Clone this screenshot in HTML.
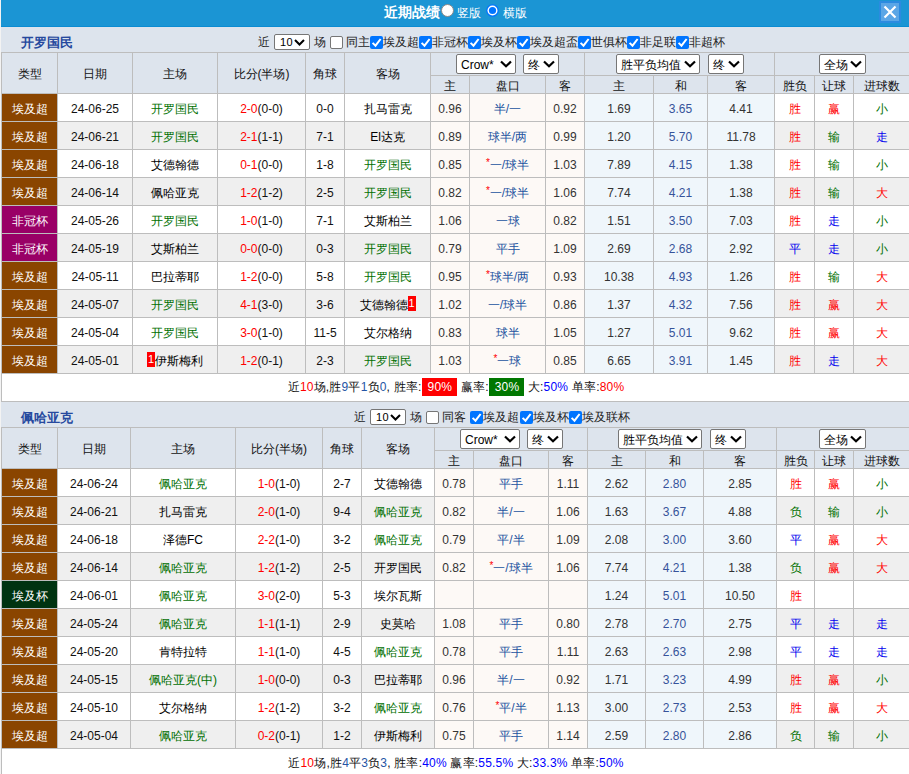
<!DOCTYPE html><html><head><meta charset="utf-8"><style>
*{box-sizing:border-box}
html,body{margin:0;padding:0}
body{width:909px;height:774px;overflow:hidden;position:relative;background:#f3f3f3;font-family:"Liberation Sans",sans-serif;font-size:12px;color:#222}
.title{position:absolute;left:1px;top:0;width:908px;height:27px;background:#1b95d4;border-bottom:1px solid #0b8cd2}
.bar{position:absolute;left:1px;width:908px;height:25px;background:#dde4ed}
.tb{position:absolute;background:#bdbdbd}
.c{position:absolute;text-align:center;white-space:nowrap;overflow:hidden;color:#111}
.od{color:#333}
.lg{color:#fff}
.sub{}
.rc{display:inline-block;width:8px;height:15px;line-height:15px;background:#f00;color:#fff;font-size:11px;vertical-align:2px;text-align:center}
.hc{color:#2353a0}
.ast{color:#f00;font-size:10px;position:relative;top:-3px}
.dr{color:#36539a}
.abs{position:absolute;white-space:nowrap}
.s{position:absolute;display:inline-block;background:#fff;border:1px solid #767676;border-radius:2px;color:#000;text-align:left;line-height:20px;padding-left:4px}
.chev{position:absolute;right:3px;top:5px}
.cb{position:absolute;width:13px;height:13px;border-radius:2px}
.cb.off{background:#fff;border:1px solid #767676}
.cb.on{background:#0075ff}
.sum{letter-spacing:0.2px}
.nb{color:#2555a5}
.sum .pr{display:inline-block;color:#fff;padding:0 5px 0 6px;line-height:18px}
</style></head><body>

<div class="title"></div>
<div class="abs" style="left:384px;top:3px;font-size:14px;font-weight:bold;color:#fff;line-height:18px">近期战绩</div>
<div class="abs" style="left:441px;top:4px;width:13px;height:13px;border-radius:50%;background:#fff;border:1px solid #888"></div>
<div class="abs" style="left:457px;top:5px;color:#fff;line-height:16px">竖版</div>
<svg class="abs" style="left:486px;top:4px" width="13" height="13"><circle cx="6.5" cy="6.5" r="6.3" fill="#0075ff"/><circle cx="6.5" cy="6.5" r="5" fill="#fff"/><circle cx="6.5" cy="6.5" r="3.6" fill="#0075ff"/></svg>
<div class="abs" style="left:503px;top:5px;color:#fff;line-height:16px">横版</div>
<div class="abs" style="left:879px;top:1px;width:22px;height:22px;background:#2b8be0"></div>
<div class="abs" style="left:881px;top:3px;width:18px;height:18px;background:#5ba6e6"></div>
<svg class="abs" style="left:879px;top:1px" width="22" height="22"><path d="M5.5 5.5 L16.5 16.5 M16.5 5.5 L5.5 16.5" stroke="#fff" stroke-width="2.2"/></svg>
<div class="bar" style="top:27px"></div>
<div class="abs" style="left:21px;top:35px;font-size:13px;font-weight:bold;color:#26499e;line-height:15px">开罗国民</div>
<div class="abs" style="left:258px;top:34px;line-height:16px">近</div>
<span class="s" style="left:274px;top:34px;width:36px;height:16px;line-height:15px;padding-left:5px;font-size:11px;border-radius:2px;letter-spacing:0.5px">10<svg class="chev" style="top:4px;right:4px" width="11" height="7"><path d="M1 1 L5.5 5.5 L10 1" stroke="#000" stroke-width="2" fill="none"/></svg></span>
<div class="abs" style="left:314px;top:34px;line-height:16px">场</div>
<div class="cb off" style="left:330px;top:36px"></div>
<div class="abs" style="left:346px;top:34px;line-height:16px">同主</div>
<div class="cb on" style="left:370px;top:36px"><svg width="13" height="13" style="position:absolute;left:0;top:0"><path d="M2.6 6.9 L5.5 9.7 L10.6 3" stroke="#fff" stroke-width="2" fill="none"/></svg></div>
<div class="abs" style="left:383px;top:34px;line-height:16px">埃及超</div>
<div class="cb on" style="left:419px;top:36px"><svg width="13" height="13" style="position:absolute;left:0;top:0"><path d="M2.6 6.9 L5.5 9.7 L10.6 3" stroke="#fff" stroke-width="2" fill="none"/></svg></div>
<div class="abs" style="left:432px;top:34px;line-height:16px">非冠杯</div>
<div class="cb on" style="left:468px;top:36px"><svg width="13" height="13" style="position:absolute;left:0;top:0"><path d="M2.6 6.9 L5.5 9.7 L10.6 3" stroke="#fff" stroke-width="2" fill="none"/></svg></div>
<div class="abs" style="left:481px;top:34px;line-height:16px">埃及杯</div>
<div class="cb on" style="left:517px;top:36px"><svg width="13" height="13" style="position:absolute;left:0;top:0"><path d="M2.6 6.9 L5.5 9.7 L10.6 3" stroke="#fff" stroke-width="2" fill="none"/></svg></div>
<div class="abs" style="left:530px;top:34px;line-height:16px">埃及超盃</div>
<div class="cb on" style="left:578px;top:36px"><svg width="13" height="13" style="position:absolute;left:0;top:0"><path d="M2.6 6.9 L5.5 9.7 L10.6 3" stroke="#fff" stroke-width="2" fill="none"/></svg></div>
<div class="abs" style="left:591px;top:34px;line-height:16px">世俱杯</div>
<div class="cb on" style="left:627px;top:36px"><svg width="13" height="13" style="position:absolute;left:0;top:0"><path d="M2.6 6.9 L5.5 9.7 L10.6 3" stroke="#fff" stroke-width="2" fill="none"/></svg></div>
<div class="abs" style="left:640px;top:34px;line-height:16px">非足联</div>
<div class="cb on" style="left:676px;top:36px"><svg width="13" height="13" style="position:absolute;left:0;top:0"><path d="M2.6 6.9 L5.5 9.7 L10.6 3" stroke="#fff" stroke-width="2" fill="none"/></svg></div>
<div class="abs" style="left:689px;top:34px;line-height:16px">非超杯</div>
<div class="tb" style="left:1px;top:52px;width:910px;height:350px"></div>
<div class="c " style="left:2px;top:53px;width:55px;height:40px;line-height:43px;background:#dde4ed">类型</div>
<div class="c " style="left:58px;top:53px;width:74px;height:40px;line-height:43px;background:#dde4ed">日期</div>
<div class="c " style="left:133px;top:53px;width:84px;height:40px;line-height:43px;background:#dde4ed">主场</div>
<div class="c " style="left:218px;top:53px;width:87px;height:40px;line-height:43px;background:#dde4ed">比分(半场)</div>
<div class="c " style="left:306px;top:53px;width:38px;height:40px;line-height:43px;background:#dde4ed">角球</div>
<div class="c " style="left:345px;top:53px;width:85px;height:40px;line-height:43px;background:#dde4ed">客场</div>
<div class="c sel" style="left:431px;top:53px;width:153px;height:22px;line-height:25px;background:#dde4ed"></div>
<div class="c sel" style="left:585px;top:53px;width:189px;height:22px;line-height:25px;background:#dde4ed"></div>
<div class="c sel" style="left:775px;top:53px;width:135px;height:22px;line-height:25px;background:#dde4ed"></div>
<div class="c sub" style="left:431px;top:76px;width:38px;height:17px;line-height:20px;background:#dde4ed">主</div>
<div class="c sub" style="left:470px;top:76px;width:75px;height:17px;line-height:20px;background:#dde4ed">盘口</div>
<div class="c sub" style="left:546px;top:76px;width:38px;height:17px;line-height:20px;background:#dde4ed">客</div>
<div class="c sub" style="left:585px;top:76px;width:68px;height:17px;line-height:20px;background:#dde4ed">主</div>
<div class="c sub" style="left:654px;top:76px;width:53px;height:17px;line-height:20px;background:#dde4ed">和</div>
<div class="c sub" style="left:708px;top:76px;width:66px;height:17px;line-height:20px;background:#dde4ed">客</div>
<div class="c sub" style="left:775px;top:76px;width:39px;height:17px;line-height:20px;background:#dde4ed">胜负</div>
<div class="c sub" style="left:815px;top:76px;width:38px;height:17px;line-height:20px;background:#dde4ed">让球</div>
<div class="c sub" style="left:854px;top:76px;width:56px;height:17px;line-height:20px;background:#dde4ed">进球数</div>
<div class="c lg" style="left:2px;top:94px;width:55px;height:27px;line-height:30px;background:#8a4500">埃及超</div>
<div class="c dt" style="left:58px;top:94px;width:74px;height:27px;line-height:30px;background:#ffffff">24-06-25</div>
<div class="c " style="left:133px;top:94px;width:84px;height:27px;line-height:30px;background:#ffffff"><span style="color:#007000">开罗国民</span></div>
<div class="c sc" style="left:218px;top:94px;width:87px;height:27px;line-height:30px;background:#ffffff"><span style="color:#ff0000">2-0</span>(0-0)</div>
<div class="c dt" style="left:306px;top:94px;width:38px;height:27px;line-height:30px;background:#ffffff">0-0</div>
<div class="c " style="left:345px;top:94px;width:85px;height:27px;line-height:30px;background:#ffffff"><span style="color:#000">扎马雷克</span></div>
<div class="c od" style="left:431px;top:94px;width:38px;height:27px;line-height:30px;background:#fdf9f6">0.96</div>
<div class="c od" style="left:470px;top:94px;width:75px;height:27px;line-height:30px;background:#fdf9f6"><span class="hc">半/一</span></div>
<div class="c od" style="left:546px;top:94px;width:38px;height:27px;line-height:30px;background:#fdf9f6">0.92</div>
<div class="c od" style="left:585px;top:94px;width:68px;height:27px;line-height:30px;background:#eff6fb">1.69</div>
<div class="c od" style="left:654px;top:94px;width:53px;height:27px;line-height:30px;background:#eff6fb"><span class="dr">3.65</span></div>
<div class="c od" style="left:708px;top:94px;width:66px;height:27px;line-height:30px;background:#eff6fb">4.41</div>
<div class="c rs" style="left:775px;top:94px;width:39px;height:27px;line-height:30px;background:#ffffff"><span style="color:#ff0000">胜</span></div>
<div class="c rs" style="left:815px;top:94px;width:38px;height:27px;line-height:30px;background:#ffffff"><span style="color:#ff0000">赢</span></div>
<div class="c rs" style="left:854px;top:94px;width:56px;height:27px;line-height:30px;background:#ffffff"><span style="color:#007000">小</span></div>
<div class="c lg" style="left:2px;top:122px;width:55px;height:27px;line-height:30px;background:#8a4500">埃及超</div>
<div class="c dt" style="left:58px;top:122px;width:74px;height:27px;line-height:30px;background:#efefef">24-06-21</div>
<div class="c " style="left:133px;top:122px;width:84px;height:27px;line-height:30px;background:#efefef"><span style="color:#007000">开罗国民</span></div>
<div class="c sc" style="left:218px;top:122px;width:87px;height:27px;line-height:30px;background:#efefef"><span style="color:#ff0000">2-1</span>(1-1)</div>
<div class="c dt" style="left:306px;top:122px;width:38px;height:27px;line-height:30px;background:#efefef">7-1</div>
<div class="c " style="left:345px;top:122px;width:85px;height:27px;line-height:30px;background:#efefef"><span style="color:#000">El达克</span></div>
<div class="c od" style="left:431px;top:122px;width:38px;height:27px;line-height:30px;background:#fdf9f6">0.89</div>
<div class="c od" style="left:470px;top:122px;width:75px;height:27px;line-height:30px;background:#fdf9f6"><span class="hc">球半/两</span></div>
<div class="c od" style="left:546px;top:122px;width:38px;height:27px;line-height:30px;background:#fdf9f6">0.99</div>
<div class="c od" style="left:585px;top:122px;width:68px;height:27px;line-height:30px;background:#eff6fb">1.20</div>
<div class="c od" style="left:654px;top:122px;width:53px;height:27px;line-height:30px;background:#eff6fb"><span class="dr">5.70</span></div>
<div class="c od" style="left:708px;top:122px;width:66px;height:27px;line-height:30px;background:#eff6fb">11.78</div>
<div class="c rs" style="left:775px;top:122px;width:39px;height:27px;line-height:30px;background:#efefef"><span style="color:#ff0000">胜</span></div>
<div class="c rs" style="left:815px;top:122px;width:38px;height:27px;line-height:30px;background:#efefef"><span style="color:#007000">输</span></div>
<div class="c rs" style="left:854px;top:122px;width:56px;height:27px;line-height:30px;background:#efefef"><span style="color:#0000ee">走</span></div>
<div class="c lg" style="left:2px;top:150px;width:55px;height:27px;line-height:30px;background:#8a4500">埃及超</div>
<div class="c dt" style="left:58px;top:150px;width:74px;height:27px;line-height:30px;background:#ffffff">24-06-18</div>
<div class="c " style="left:133px;top:150px;width:84px;height:27px;line-height:30px;background:#ffffff"><span style="color:#000">艾德翰德</span></div>
<div class="c sc" style="left:218px;top:150px;width:87px;height:27px;line-height:30px;background:#ffffff"><span style="color:#ff0000">0-1</span>(0-0)</div>
<div class="c dt" style="left:306px;top:150px;width:38px;height:27px;line-height:30px;background:#ffffff">1-8</div>
<div class="c " style="left:345px;top:150px;width:85px;height:27px;line-height:30px;background:#ffffff"><span style="color:#007000">开罗国民</span></div>
<div class="c od" style="left:431px;top:150px;width:38px;height:27px;line-height:30px;background:#fdf9f6">0.85</div>
<div class="c od" style="left:470px;top:150px;width:75px;height:27px;line-height:30px;background:#fdf9f6"><span class="hc"><span class="ast">*</span>一/球半</span></div>
<div class="c od" style="left:546px;top:150px;width:38px;height:27px;line-height:30px;background:#fdf9f6">1.03</div>
<div class="c od" style="left:585px;top:150px;width:68px;height:27px;line-height:30px;background:#eff6fb">7.89</div>
<div class="c od" style="left:654px;top:150px;width:53px;height:27px;line-height:30px;background:#eff6fb"><span class="dr">4.15</span></div>
<div class="c od" style="left:708px;top:150px;width:66px;height:27px;line-height:30px;background:#eff6fb">1.38</div>
<div class="c rs" style="left:775px;top:150px;width:39px;height:27px;line-height:30px;background:#ffffff"><span style="color:#ff0000">胜</span></div>
<div class="c rs" style="left:815px;top:150px;width:38px;height:27px;line-height:30px;background:#ffffff"><span style="color:#007000">输</span></div>
<div class="c rs" style="left:854px;top:150px;width:56px;height:27px;line-height:30px;background:#ffffff"><span style="color:#007000">小</span></div>
<div class="c lg" style="left:2px;top:178px;width:55px;height:27px;line-height:30px;background:#8a4500">埃及超</div>
<div class="c dt" style="left:58px;top:178px;width:74px;height:27px;line-height:30px;background:#efefef">24-06-14</div>
<div class="c " style="left:133px;top:178px;width:84px;height:27px;line-height:30px;background:#efefef"><span style="color:#000">佩哈亚克</span></div>
<div class="c sc" style="left:218px;top:178px;width:87px;height:27px;line-height:30px;background:#efefef"><span style="color:#ff0000">1-2</span>(1-2)</div>
<div class="c dt" style="left:306px;top:178px;width:38px;height:27px;line-height:30px;background:#efefef">2-5</div>
<div class="c " style="left:345px;top:178px;width:85px;height:27px;line-height:30px;background:#efefef"><span style="color:#007000">开罗国民</span></div>
<div class="c od" style="left:431px;top:178px;width:38px;height:27px;line-height:30px;background:#fdf9f6">0.82</div>
<div class="c od" style="left:470px;top:178px;width:75px;height:27px;line-height:30px;background:#fdf9f6"><span class="hc"><span class="ast">*</span>一/球半</span></div>
<div class="c od" style="left:546px;top:178px;width:38px;height:27px;line-height:30px;background:#fdf9f6">1.06</div>
<div class="c od" style="left:585px;top:178px;width:68px;height:27px;line-height:30px;background:#eff6fb">7.74</div>
<div class="c od" style="left:654px;top:178px;width:53px;height:27px;line-height:30px;background:#eff6fb"><span class="dr">4.21</span></div>
<div class="c od" style="left:708px;top:178px;width:66px;height:27px;line-height:30px;background:#eff6fb">1.38</div>
<div class="c rs" style="left:775px;top:178px;width:39px;height:27px;line-height:30px;background:#efefef"><span style="color:#ff0000">胜</span></div>
<div class="c rs" style="left:815px;top:178px;width:38px;height:27px;line-height:30px;background:#efefef"><span style="color:#007000">输</span></div>
<div class="c rs" style="left:854px;top:178px;width:56px;height:27px;line-height:30px;background:#efefef"><span style="color:#ff0000">大</span></div>
<div class="c lg" style="left:2px;top:206px;width:55px;height:27px;line-height:30px;background:#990066">非冠杯</div>
<div class="c dt" style="left:58px;top:206px;width:74px;height:27px;line-height:30px;background:#ffffff">24-05-26</div>
<div class="c " style="left:133px;top:206px;width:84px;height:27px;line-height:30px;background:#ffffff"><span style="color:#007000">开罗国民</span></div>
<div class="c sc" style="left:218px;top:206px;width:87px;height:27px;line-height:30px;background:#ffffff"><span style="color:#ff0000">1-0</span>(1-0)</div>
<div class="c dt" style="left:306px;top:206px;width:38px;height:27px;line-height:30px;background:#ffffff">7-1</div>
<div class="c " style="left:345px;top:206px;width:85px;height:27px;line-height:30px;background:#ffffff"><span style="color:#000">艾斯柏兰</span></div>
<div class="c od" style="left:431px;top:206px;width:38px;height:27px;line-height:30px;background:#fdf9f6">1.06</div>
<div class="c od" style="left:470px;top:206px;width:75px;height:27px;line-height:30px;background:#fdf9f6"><span class="hc">一球</span></div>
<div class="c od" style="left:546px;top:206px;width:38px;height:27px;line-height:30px;background:#fdf9f6">0.82</div>
<div class="c od" style="left:585px;top:206px;width:68px;height:27px;line-height:30px;background:#eff6fb">1.51</div>
<div class="c od" style="left:654px;top:206px;width:53px;height:27px;line-height:30px;background:#eff6fb"><span class="dr">3.50</span></div>
<div class="c od" style="left:708px;top:206px;width:66px;height:27px;line-height:30px;background:#eff6fb">7.03</div>
<div class="c rs" style="left:775px;top:206px;width:39px;height:27px;line-height:30px;background:#ffffff"><span style="color:#ff0000">胜</span></div>
<div class="c rs" style="left:815px;top:206px;width:38px;height:27px;line-height:30px;background:#ffffff"><span style="color:#0000ee">走</span></div>
<div class="c rs" style="left:854px;top:206px;width:56px;height:27px;line-height:30px;background:#ffffff"><span style="color:#007000">小</span></div>
<div class="c lg" style="left:2px;top:234px;width:55px;height:27px;line-height:30px;background:#990066">非冠杯</div>
<div class="c dt" style="left:58px;top:234px;width:74px;height:27px;line-height:30px;background:#efefef">24-05-19</div>
<div class="c " style="left:133px;top:234px;width:84px;height:27px;line-height:30px;background:#efefef"><span style="color:#000">艾斯柏兰</span></div>
<div class="c sc" style="left:218px;top:234px;width:87px;height:27px;line-height:30px;background:#efefef"><span style="color:#ff0000">0-0</span>(0-0)</div>
<div class="c dt" style="left:306px;top:234px;width:38px;height:27px;line-height:30px;background:#efefef">0-3</div>
<div class="c " style="left:345px;top:234px;width:85px;height:27px;line-height:30px;background:#efefef"><span style="color:#007000">开罗国民</span></div>
<div class="c od" style="left:431px;top:234px;width:38px;height:27px;line-height:30px;background:#fdf9f6">0.79</div>
<div class="c od" style="left:470px;top:234px;width:75px;height:27px;line-height:30px;background:#fdf9f6"><span class="hc">平手</span></div>
<div class="c od" style="left:546px;top:234px;width:38px;height:27px;line-height:30px;background:#fdf9f6">1.09</div>
<div class="c od" style="left:585px;top:234px;width:68px;height:27px;line-height:30px;background:#eff6fb">2.69</div>
<div class="c od" style="left:654px;top:234px;width:53px;height:27px;line-height:30px;background:#eff6fb"><span class="dr">2.68</span></div>
<div class="c od" style="left:708px;top:234px;width:66px;height:27px;line-height:30px;background:#eff6fb">2.92</div>
<div class="c rs" style="left:775px;top:234px;width:39px;height:27px;line-height:30px;background:#efefef"><span style="color:#0000ee">平</span></div>
<div class="c rs" style="left:815px;top:234px;width:38px;height:27px;line-height:30px;background:#efefef"><span style="color:#0000ee">走</span></div>
<div class="c rs" style="left:854px;top:234px;width:56px;height:27px;line-height:30px;background:#efefef"><span style="color:#007000">小</span></div>
<div class="c lg" style="left:2px;top:262px;width:55px;height:27px;line-height:30px;background:#8a4500">埃及超</div>
<div class="c dt" style="left:58px;top:262px;width:74px;height:27px;line-height:30px;background:#ffffff">24-05-11</div>
<div class="c " style="left:133px;top:262px;width:84px;height:27px;line-height:30px;background:#ffffff"><span style="color:#000">巴拉蒂耶</span></div>
<div class="c sc" style="left:218px;top:262px;width:87px;height:27px;line-height:30px;background:#ffffff"><span style="color:#ff0000">1-2</span>(0-0)</div>
<div class="c dt" style="left:306px;top:262px;width:38px;height:27px;line-height:30px;background:#ffffff">5-8</div>
<div class="c " style="left:345px;top:262px;width:85px;height:27px;line-height:30px;background:#ffffff"><span style="color:#007000">开罗国民</span></div>
<div class="c od" style="left:431px;top:262px;width:38px;height:27px;line-height:30px;background:#fdf9f6">0.95</div>
<div class="c od" style="left:470px;top:262px;width:75px;height:27px;line-height:30px;background:#fdf9f6"><span class="hc"><span class="ast">*</span>球半/两</span></div>
<div class="c od" style="left:546px;top:262px;width:38px;height:27px;line-height:30px;background:#fdf9f6">0.93</div>
<div class="c od" style="left:585px;top:262px;width:68px;height:27px;line-height:30px;background:#eff6fb">10.38</div>
<div class="c od" style="left:654px;top:262px;width:53px;height:27px;line-height:30px;background:#eff6fb"><span class="dr">4.93</span></div>
<div class="c od" style="left:708px;top:262px;width:66px;height:27px;line-height:30px;background:#eff6fb">1.26</div>
<div class="c rs" style="left:775px;top:262px;width:39px;height:27px;line-height:30px;background:#ffffff"><span style="color:#ff0000">胜</span></div>
<div class="c rs" style="left:815px;top:262px;width:38px;height:27px;line-height:30px;background:#ffffff"><span style="color:#007000">输</span></div>
<div class="c rs" style="left:854px;top:262px;width:56px;height:27px;line-height:30px;background:#ffffff"><span style="color:#ff0000">大</span></div>
<div class="c lg" style="left:2px;top:290px;width:55px;height:27px;line-height:30px;background:#8a4500">埃及超</div>
<div class="c dt" style="left:58px;top:290px;width:74px;height:27px;line-height:30px;background:#efefef">24-05-07</div>
<div class="c " style="left:133px;top:290px;width:84px;height:27px;line-height:30px;background:#efefef"><span style="color:#007000">开罗国民</span></div>
<div class="c sc" style="left:218px;top:290px;width:87px;height:27px;line-height:30px;background:#efefef"><span style="color:#ff0000">4-1</span>(3-0)</div>
<div class="c dt" style="left:306px;top:290px;width:38px;height:27px;line-height:30px;background:#efefef">3-6</div>
<div class="c " style="left:345px;top:290px;width:85px;height:27px;line-height:30px;background:#efefef"><span style="color:#000">艾德翰德</span><span class="rc">1</span></div>
<div class="c od" style="left:431px;top:290px;width:38px;height:27px;line-height:30px;background:#fdf9f6">1.02</div>
<div class="c od" style="left:470px;top:290px;width:75px;height:27px;line-height:30px;background:#fdf9f6"><span class="hc">一/球半</span></div>
<div class="c od" style="left:546px;top:290px;width:38px;height:27px;line-height:30px;background:#fdf9f6">0.86</div>
<div class="c od" style="left:585px;top:290px;width:68px;height:27px;line-height:30px;background:#eff6fb">1.37</div>
<div class="c od" style="left:654px;top:290px;width:53px;height:27px;line-height:30px;background:#eff6fb"><span class="dr">4.32</span></div>
<div class="c od" style="left:708px;top:290px;width:66px;height:27px;line-height:30px;background:#eff6fb">7.56</div>
<div class="c rs" style="left:775px;top:290px;width:39px;height:27px;line-height:30px;background:#efefef"><span style="color:#ff0000">胜</span></div>
<div class="c rs" style="left:815px;top:290px;width:38px;height:27px;line-height:30px;background:#efefef"><span style="color:#ff0000">赢</span></div>
<div class="c rs" style="left:854px;top:290px;width:56px;height:27px;line-height:30px;background:#efefef"><span style="color:#ff0000">大</span></div>
<div class="c lg" style="left:2px;top:318px;width:55px;height:27px;line-height:30px;background:#8a4500">埃及超</div>
<div class="c dt" style="left:58px;top:318px;width:74px;height:27px;line-height:30px;background:#ffffff">24-05-04</div>
<div class="c " style="left:133px;top:318px;width:84px;height:27px;line-height:30px;background:#ffffff"><span style="color:#007000">开罗国民</span></div>
<div class="c sc" style="left:218px;top:318px;width:87px;height:27px;line-height:30px;background:#ffffff"><span style="color:#ff0000">3-0</span>(1-0)</div>
<div class="c dt" style="left:306px;top:318px;width:38px;height:27px;line-height:30px;background:#ffffff">11-5</div>
<div class="c " style="left:345px;top:318px;width:85px;height:27px;line-height:30px;background:#ffffff"><span style="color:#000">艾尔格纳</span></div>
<div class="c od" style="left:431px;top:318px;width:38px;height:27px;line-height:30px;background:#fdf9f6">0.83</div>
<div class="c od" style="left:470px;top:318px;width:75px;height:27px;line-height:30px;background:#fdf9f6"><span class="hc">球半</span></div>
<div class="c od" style="left:546px;top:318px;width:38px;height:27px;line-height:30px;background:#fdf9f6">1.05</div>
<div class="c od" style="left:585px;top:318px;width:68px;height:27px;line-height:30px;background:#eff6fb">1.27</div>
<div class="c od" style="left:654px;top:318px;width:53px;height:27px;line-height:30px;background:#eff6fb"><span class="dr">5.01</span></div>
<div class="c od" style="left:708px;top:318px;width:66px;height:27px;line-height:30px;background:#eff6fb">9.62</div>
<div class="c rs" style="left:775px;top:318px;width:39px;height:27px;line-height:30px;background:#ffffff"><span style="color:#ff0000">胜</span></div>
<div class="c rs" style="left:815px;top:318px;width:38px;height:27px;line-height:30px;background:#ffffff"><span style="color:#ff0000">赢</span></div>
<div class="c rs" style="left:854px;top:318px;width:56px;height:27px;line-height:30px;background:#ffffff"><span style="color:#ff0000">大</span></div>
<div class="c lg" style="left:2px;top:346px;width:55px;height:27px;line-height:30px;background:#8a4500">埃及超</div>
<div class="c dt" style="left:58px;top:346px;width:74px;height:27px;line-height:30px;background:#efefef">24-05-01</div>
<div class="c " style="left:133px;top:346px;width:84px;height:27px;line-height:30px;background:#efefef"><span class="rc">1</span><span style="color:#000">伊斯梅利</span></div>
<div class="c sc" style="left:218px;top:346px;width:87px;height:27px;line-height:30px;background:#efefef"><span style="color:#ff0000">1-2</span>(0-1)</div>
<div class="c dt" style="left:306px;top:346px;width:38px;height:27px;line-height:30px;background:#efefef">2-3</div>
<div class="c " style="left:345px;top:346px;width:85px;height:27px;line-height:30px;background:#efefef"><span style="color:#007000">开罗国民</span></div>
<div class="c od" style="left:431px;top:346px;width:38px;height:27px;line-height:30px;background:#fdf9f6">1.03</div>
<div class="c od" style="left:470px;top:346px;width:75px;height:27px;line-height:30px;background:#fdf9f6"><span class="hc"><span class="ast">*</span>一球</span></div>
<div class="c od" style="left:546px;top:346px;width:38px;height:27px;line-height:30px;background:#fdf9f6">0.85</div>
<div class="c od" style="left:585px;top:346px;width:68px;height:27px;line-height:30px;background:#eff6fb">6.65</div>
<div class="c od" style="left:654px;top:346px;width:53px;height:27px;line-height:30px;background:#eff6fb"><span class="dr">3.91</span></div>
<div class="c od" style="left:708px;top:346px;width:66px;height:27px;line-height:30px;background:#eff6fb">1.45</div>
<div class="c rs" style="left:775px;top:346px;width:39px;height:27px;line-height:30px;background:#efefef"><span style="color:#ff0000">胜</span></div>
<div class="c rs" style="left:815px;top:346px;width:38px;height:27px;line-height:30px;background:#efefef"><span style="color:#0000ee">走</span></div>
<div class="c rs" style="left:854px;top:346px;width:56px;height:27px;line-height:30px;background:#efefef"><span style="color:#ff0000">大</span></div>
<div class="c sum" style="left:2px;top:374px;width:908px;height:27px;line-height:26px;background:#ffffff">近<span style="color:#f00">10</span>场,胜<span class="nb">9</span>平<span class="nb">1</span>负<span class="nb">0</span>, 胜率:<span class="pr" style="background:#f00">90%</span> 赢率:<span class="pr" style="background:#007700">30%</span> 大:<span style="color:#00f">50%</span> 单率:<span style="color:#f00">80%</span></div>
<span class="s "  style="left:456px;top:54px;width:60px;height:20px">Crow*<svg class="chev" width="12" height="8"><path d="M1 1.5 L6 6.3 L11 1.5" stroke="#000" stroke-width="2.2" fill="none"/></svg></span>
<span class="s " style="left:523px;top:54px;width:36px;height:20px">终<svg class="chev" width="12" height="8"><path d="M1 1.5 L6 6.3 L11 1.5" stroke="#000" stroke-width="2.2" fill="none"/></svg></span>
<span class="s " style="left:616px;top:54px;width:84px;height:20px">胜平负均值<svg class="chev" width="12" height="8"><path d="M1 1.5 L6 6.3 L11 1.5" stroke="#000" stroke-width="2.2" fill="none"/></svg></span>
<span class="s " style="left:708px;top:54px;width:36px;height:20px">终<svg class="chev" width="12" height="8"><path d="M1 1.5 L6 6.3 L11 1.5" stroke="#000" stroke-width="2.2" fill="none"/></svg></span>
<span class="s " style="left:819px;top:54px;width:47px;height:20px">全场<svg class="chev" width="12" height="8"><path d="M1 1.5 L6 6.3 L11 1.5" stroke="#000" stroke-width="2.2" fill="none"/></svg></span>
<div class="bar" style="top:402px"></div>
<div class="abs" style="left:21px;top:410px;font-size:13px;font-weight:bold;color:#26499e;line-height:15px">佩哈亚克</div>
<div class="abs" style="left:354px;top:409px;line-height:16px">近</div>
<span class="s" style="left:370px;top:409px;width:36px;height:16px;line-height:15px;padding-left:5px;font-size:11px;border-radius:2px;letter-spacing:0.5px">10<svg class="chev" style="top:4px;right:4px" width="11" height="7"><path d="M1 1 L5.5 5.5 L10 1" stroke="#000" stroke-width="2" fill="none"/></svg></span>
<div class="abs" style="left:410px;top:409px;line-height:16px">场</div>
<div class="cb off" style="left:426px;top:411px"></div>
<div class="abs" style="left:442px;top:409px;line-height:16px">同客</div>
<div class="cb on" style="left:470px;top:411px"><svg width="13" height="13" style="position:absolute;left:0;top:0"><path d="M2.6 6.9 L5.5 9.7 L10.6 3" stroke="#fff" stroke-width="2" fill="none"/></svg></div>
<div class="abs" style="left:483px;top:409px;line-height:16px">埃及超</div>
<div class="cb on" style="left:520px;top:411px"><svg width="13" height="13" style="position:absolute;left:0;top:0"><path d="M2.6 6.9 L5.5 9.7 L10.6 3" stroke="#fff" stroke-width="2" fill="none"/></svg></div>
<div class="abs" style="left:533px;top:409px;line-height:16px">埃及杯</div>
<div class="cb on" style="left:569px;top:411px"><svg width="13" height="13" style="position:absolute;left:0;top:0"><path d="M2.6 6.9 L5.5 9.7 L10.6 3" stroke="#fff" stroke-width="2" fill="none"/></svg></div>
<div class="abs" style="left:582px;top:409px;line-height:16px">埃及联杯</div>
<div class="tb" style="left:1px;top:427px;width:910px;height:350px"></div>
<div class="c " style="left:2px;top:428px;width:55px;height:40px;line-height:43px;background:#dde4ed">类型</div>
<div class="c " style="left:58px;top:428px;width:72px;height:40px;line-height:43px;background:#dde4ed">日期</div>
<div class="c " style="left:131px;top:428px;width:104px;height:40px;line-height:43px;background:#dde4ed">主场</div>
<div class="c " style="left:236px;top:428px;width:86px;height:40px;line-height:43px;background:#dde4ed">比分(半场)</div>
<div class="c " style="left:323px;top:428px;width:38px;height:40px;line-height:43px;background:#dde4ed">角球</div>
<div class="c " style="left:362px;top:428px;width:72px;height:40px;line-height:43px;background:#dde4ed">客场</div>
<div class="c sel" style="left:435px;top:428px;width:152px;height:22px;line-height:25px;background:#dde4ed"></div>
<div class="c sel" style="left:588px;top:428px;width:188px;height:22px;line-height:25px;background:#dde4ed"></div>
<div class="c sel" style="left:777px;top:428px;width:133px;height:22px;line-height:25px;background:#dde4ed"></div>
<div class="c sub" style="left:435px;top:451px;width:38px;height:17px;line-height:20px;background:#dde4ed">主</div>
<div class="c sub" style="left:474px;top:451px;width:74px;height:17px;line-height:20px;background:#dde4ed">盘口</div>
<div class="c sub" style="left:549px;top:451px;width:38px;height:17px;line-height:20px;background:#dde4ed">客</div>
<div class="c sub" style="left:588px;top:451px;width:57px;height:17px;line-height:20px;background:#dde4ed">主</div>
<div class="c sub" style="left:646px;top:451px;width:57px;height:17px;line-height:20px;background:#dde4ed">和</div>
<div class="c sub" style="left:704px;top:451px;width:72px;height:17px;line-height:20px;background:#dde4ed">客</div>
<div class="c sub" style="left:777px;top:451px;width:37px;height:17px;line-height:20px;background:#dde4ed">胜负</div>
<div class="c sub" style="left:815px;top:451px;width:38px;height:17px;line-height:20px;background:#dde4ed">让球</div>
<div class="c sub" style="left:854px;top:451px;width:56px;height:17px;line-height:20px;background:#dde4ed">进球数</div>
<div class="c lg" style="left:2px;top:469px;width:55px;height:27px;line-height:30px;background:#8a4500">埃及超</div>
<div class="c dt" style="left:58px;top:469px;width:72px;height:27px;line-height:30px;background:#ffffff">24-06-24</div>
<div class="c " style="left:131px;top:469px;width:104px;height:27px;line-height:30px;background:#ffffff"><span style="color:#007000">佩哈亚克</span></div>
<div class="c sc" style="left:236px;top:469px;width:86px;height:27px;line-height:30px;background:#ffffff"><span style="color:#ff0000">1-0</span>(1-0)</div>
<div class="c dt" style="left:323px;top:469px;width:38px;height:27px;line-height:30px;background:#ffffff">2-7</div>
<div class="c " style="left:362px;top:469px;width:72px;height:27px;line-height:30px;background:#ffffff"><span style="color:#000">艾德翰德</span></div>
<div class="c od" style="left:435px;top:469px;width:38px;height:27px;line-height:30px;background:#fdf9f6">0.78</div>
<div class="c od" style="left:474px;top:469px;width:74px;height:27px;line-height:30px;background:#fdf9f6"><span class="hc">平手</span></div>
<div class="c od" style="left:549px;top:469px;width:38px;height:27px;line-height:30px;background:#fdf9f6">1.11</div>
<div class="c od" style="left:588px;top:469px;width:57px;height:27px;line-height:30px;background:#eff6fb">2.62</div>
<div class="c od" style="left:646px;top:469px;width:57px;height:27px;line-height:30px;background:#eff6fb"><span class="dr">2.80</span></div>
<div class="c od" style="left:704px;top:469px;width:72px;height:27px;line-height:30px;background:#eff6fb">2.85</div>
<div class="c rs" style="left:777px;top:469px;width:37px;height:27px;line-height:30px;background:#ffffff"><span style="color:#ff0000">胜</span></div>
<div class="c rs" style="left:815px;top:469px;width:38px;height:27px;line-height:30px;background:#ffffff"><span style="color:#ff0000">赢</span></div>
<div class="c rs" style="left:854px;top:469px;width:56px;height:27px;line-height:30px;background:#ffffff"><span style="color:#007000">小</span></div>
<div class="c lg" style="left:2px;top:497px;width:55px;height:27px;line-height:30px;background:#8a4500">埃及超</div>
<div class="c dt" style="left:58px;top:497px;width:72px;height:27px;line-height:30px;background:#efefef">24-06-21</div>
<div class="c " style="left:131px;top:497px;width:104px;height:27px;line-height:30px;background:#efefef"><span style="color:#000">扎马雷克</span></div>
<div class="c sc" style="left:236px;top:497px;width:86px;height:27px;line-height:30px;background:#efefef"><span style="color:#ff0000">2-0</span>(1-0)</div>
<div class="c dt" style="left:323px;top:497px;width:38px;height:27px;line-height:30px;background:#efefef">9-4</div>
<div class="c " style="left:362px;top:497px;width:72px;height:27px;line-height:30px;background:#efefef"><span style="color:#007000">佩哈亚克</span></div>
<div class="c od" style="left:435px;top:497px;width:38px;height:27px;line-height:30px;background:#fdf9f6">0.82</div>
<div class="c od" style="left:474px;top:497px;width:74px;height:27px;line-height:30px;background:#fdf9f6"><span class="hc">半/一</span></div>
<div class="c od" style="left:549px;top:497px;width:38px;height:27px;line-height:30px;background:#fdf9f6">1.06</div>
<div class="c od" style="left:588px;top:497px;width:57px;height:27px;line-height:30px;background:#eff6fb">1.63</div>
<div class="c od" style="left:646px;top:497px;width:57px;height:27px;line-height:30px;background:#eff6fb"><span class="dr">3.67</span></div>
<div class="c od" style="left:704px;top:497px;width:72px;height:27px;line-height:30px;background:#eff6fb">4.88</div>
<div class="c rs" style="left:777px;top:497px;width:37px;height:27px;line-height:30px;background:#efefef"><span style="color:#007000">负</span></div>
<div class="c rs" style="left:815px;top:497px;width:38px;height:27px;line-height:30px;background:#efefef"><span style="color:#007000">输</span></div>
<div class="c rs" style="left:854px;top:497px;width:56px;height:27px;line-height:30px;background:#efefef"><span style="color:#007000">小</span></div>
<div class="c lg" style="left:2px;top:525px;width:55px;height:27px;line-height:30px;background:#8a4500">埃及超</div>
<div class="c dt" style="left:58px;top:525px;width:72px;height:27px;line-height:30px;background:#ffffff">24-06-18</div>
<div class="c " style="left:131px;top:525px;width:104px;height:27px;line-height:30px;background:#ffffff"><span style="color:#000">泽德FC</span></div>
<div class="c sc" style="left:236px;top:525px;width:86px;height:27px;line-height:30px;background:#ffffff"><span style="color:#ff0000">2-2</span>(1-0)</div>
<div class="c dt" style="left:323px;top:525px;width:38px;height:27px;line-height:30px;background:#ffffff">3-2</div>
<div class="c " style="left:362px;top:525px;width:72px;height:27px;line-height:30px;background:#ffffff"><span style="color:#007000">佩哈亚克</span></div>
<div class="c od" style="left:435px;top:525px;width:38px;height:27px;line-height:30px;background:#fdf9f6">0.79</div>
<div class="c od" style="left:474px;top:525px;width:74px;height:27px;line-height:30px;background:#fdf9f6"><span class="hc">平/半</span></div>
<div class="c od" style="left:549px;top:525px;width:38px;height:27px;line-height:30px;background:#fdf9f6">1.09</div>
<div class="c od" style="left:588px;top:525px;width:57px;height:27px;line-height:30px;background:#eff6fb">2.08</div>
<div class="c od" style="left:646px;top:525px;width:57px;height:27px;line-height:30px;background:#eff6fb"><span class="dr">3.00</span></div>
<div class="c od" style="left:704px;top:525px;width:72px;height:27px;line-height:30px;background:#eff6fb">3.60</div>
<div class="c rs" style="left:777px;top:525px;width:37px;height:27px;line-height:30px;background:#ffffff"><span style="color:#0000ee">平</span></div>
<div class="c rs" style="left:815px;top:525px;width:38px;height:27px;line-height:30px;background:#ffffff"><span style="color:#ff0000">赢</span></div>
<div class="c rs" style="left:854px;top:525px;width:56px;height:27px;line-height:30px;background:#ffffff"><span style="color:#ff0000">大</span></div>
<div class="c lg" style="left:2px;top:553px;width:55px;height:27px;line-height:30px;background:#8a4500">埃及超</div>
<div class="c dt" style="left:58px;top:553px;width:72px;height:27px;line-height:30px;background:#efefef">24-06-14</div>
<div class="c " style="left:131px;top:553px;width:104px;height:27px;line-height:30px;background:#efefef"><span style="color:#007000">佩哈亚克</span></div>
<div class="c sc" style="left:236px;top:553px;width:86px;height:27px;line-height:30px;background:#efefef"><span style="color:#ff0000">1-2</span>(1-2)</div>
<div class="c dt" style="left:323px;top:553px;width:38px;height:27px;line-height:30px;background:#efefef">2-5</div>
<div class="c " style="left:362px;top:553px;width:72px;height:27px;line-height:30px;background:#efefef"><span style="color:#000">开罗国民</span></div>
<div class="c od" style="left:435px;top:553px;width:38px;height:27px;line-height:30px;background:#fdf9f6">0.82</div>
<div class="c od" style="left:474px;top:553px;width:74px;height:27px;line-height:30px;background:#fdf9f6"><span class="hc"><span class="ast">*</span>一/球半</span></div>
<div class="c od" style="left:549px;top:553px;width:38px;height:27px;line-height:30px;background:#fdf9f6">1.06</div>
<div class="c od" style="left:588px;top:553px;width:57px;height:27px;line-height:30px;background:#eff6fb">7.74</div>
<div class="c od" style="left:646px;top:553px;width:57px;height:27px;line-height:30px;background:#eff6fb"><span class="dr">4.21</span></div>
<div class="c od" style="left:704px;top:553px;width:72px;height:27px;line-height:30px;background:#eff6fb">1.38</div>
<div class="c rs" style="left:777px;top:553px;width:37px;height:27px;line-height:30px;background:#efefef"><span style="color:#007000">负</span></div>
<div class="c rs" style="left:815px;top:553px;width:38px;height:27px;line-height:30px;background:#efefef"><span style="color:#ff0000">赢</span></div>
<div class="c rs" style="left:854px;top:553px;width:56px;height:27px;line-height:30px;background:#efefef"><span style="color:#ff0000">大</span></div>
<div class="c lg" style="left:2px;top:581px;width:55px;height:27px;line-height:30px;background:#003311">埃及杯</div>
<div class="c dt" style="left:58px;top:581px;width:72px;height:27px;line-height:30px;background:#ffffff">24-06-01</div>
<div class="c " style="left:131px;top:581px;width:104px;height:27px;line-height:30px;background:#ffffff"><span style="color:#007000">佩哈亚克</span></div>
<div class="c sc" style="left:236px;top:581px;width:86px;height:27px;line-height:30px;background:#ffffff"><span style="color:#ff0000">3-0</span>(2-0)</div>
<div class="c dt" style="left:323px;top:581px;width:38px;height:27px;line-height:30px;background:#ffffff">5-3</div>
<div class="c " style="left:362px;top:581px;width:72px;height:27px;line-height:30px;background:#ffffff"><span style="color:#000">埃尔瓦斯</span></div>
<div class="c od" style="left:435px;top:581px;width:38px;height:27px;line-height:30px;background:#fdf9f6"></div>
<div class="c od" style="left:474px;top:581px;width:74px;height:27px;line-height:30px;background:#fdf9f6"></div>
<div class="c od" style="left:549px;top:581px;width:38px;height:27px;line-height:30px;background:#fdf9f6"></div>
<div class="c od" style="left:588px;top:581px;width:57px;height:27px;line-height:30px;background:#eff6fb">1.24</div>
<div class="c od" style="left:646px;top:581px;width:57px;height:27px;line-height:30px;background:#eff6fb"><span class="dr">5.01</span></div>
<div class="c od" style="left:704px;top:581px;width:72px;height:27px;line-height:30px;background:#eff6fb">10.50</div>
<div class="c rs" style="left:777px;top:581px;width:37px;height:27px;line-height:30px;background:#ffffff"><span style="color:#ff0000">胜</span></div>
<div class="c rs" style="left:815px;top:581px;width:38px;height:27px;line-height:30px;background:#ffffff"></div>
<div class="c rs" style="left:854px;top:581px;width:56px;height:27px;line-height:30px;background:#ffffff"></div>
<div class="c lg" style="left:2px;top:609px;width:55px;height:27px;line-height:30px;background:#8a4500">埃及超</div>
<div class="c dt" style="left:58px;top:609px;width:72px;height:27px;line-height:30px;background:#efefef">24-05-24</div>
<div class="c " style="left:131px;top:609px;width:104px;height:27px;line-height:30px;background:#efefef"><span style="color:#007000">佩哈亚克</span></div>
<div class="c sc" style="left:236px;top:609px;width:86px;height:27px;line-height:30px;background:#efefef"><span style="color:#ff0000">1-1</span>(1-1)</div>
<div class="c dt" style="left:323px;top:609px;width:38px;height:27px;line-height:30px;background:#efefef">2-9</div>
<div class="c " style="left:362px;top:609px;width:72px;height:27px;line-height:30px;background:#efefef"><span style="color:#000">史莫哈</span></div>
<div class="c od" style="left:435px;top:609px;width:38px;height:27px;line-height:30px;background:#fdf9f6">1.08</div>
<div class="c od" style="left:474px;top:609px;width:74px;height:27px;line-height:30px;background:#fdf9f6"><span class="hc">平手</span></div>
<div class="c od" style="left:549px;top:609px;width:38px;height:27px;line-height:30px;background:#fdf9f6">0.80</div>
<div class="c od" style="left:588px;top:609px;width:57px;height:27px;line-height:30px;background:#eff6fb">2.78</div>
<div class="c od" style="left:646px;top:609px;width:57px;height:27px;line-height:30px;background:#eff6fb"><span class="dr">2.70</span></div>
<div class="c od" style="left:704px;top:609px;width:72px;height:27px;line-height:30px;background:#eff6fb">2.75</div>
<div class="c rs" style="left:777px;top:609px;width:37px;height:27px;line-height:30px;background:#efefef"><span style="color:#0000ee">平</span></div>
<div class="c rs" style="left:815px;top:609px;width:38px;height:27px;line-height:30px;background:#efefef"><span style="color:#0000ee">走</span></div>
<div class="c rs" style="left:854px;top:609px;width:56px;height:27px;line-height:30px;background:#efefef"><span style="color:#0000ee">走</span></div>
<div class="c lg" style="left:2px;top:637px;width:55px;height:27px;line-height:30px;background:#8a4500">埃及超</div>
<div class="c dt" style="left:58px;top:637px;width:72px;height:27px;line-height:30px;background:#ffffff">24-05-20</div>
<div class="c " style="left:131px;top:637px;width:104px;height:27px;line-height:30px;background:#ffffff"><span style="color:#000">肯特拉特</span></div>
<div class="c sc" style="left:236px;top:637px;width:86px;height:27px;line-height:30px;background:#ffffff"><span style="color:#ff0000">1-1</span>(1-0)</div>
<div class="c dt" style="left:323px;top:637px;width:38px;height:27px;line-height:30px;background:#ffffff">4-5</div>
<div class="c " style="left:362px;top:637px;width:72px;height:27px;line-height:30px;background:#ffffff"><span style="color:#007000">佩哈亚克</span></div>
<div class="c od" style="left:435px;top:637px;width:38px;height:27px;line-height:30px;background:#fdf9f6">0.78</div>
<div class="c od" style="left:474px;top:637px;width:74px;height:27px;line-height:30px;background:#fdf9f6"><span class="hc">平手</span></div>
<div class="c od" style="left:549px;top:637px;width:38px;height:27px;line-height:30px;background:#fdf9f6">1.11</div>
<div class="c od" style="left:588px;top:637px;width:57px;height:27px;line-height:30px;background:#eff6fb">2.63</div>
<div class="c od" style="left:646px;top:637px;width:57px;height:27px;line-height:30px;background:#eff6fb"><span class="dr">2.63</span></div>
<div class="c od" style="left:704px;top:637px;width:72px;height:27px;line-height:30px;background:#eff6fb">2.98</div>
<div class="c rs" style="left:777px;top:637px;width:37px;height:27px;line-height:30px;background:#ffffff"><span style="color:#0000ee">平</span></div>
<div class="c rs" style="left:815px;top:637px;width:38px;height:27px;line-height:30px;background:#ffffff"><span style="color:#0000ee">走</span></div>
<div class="c rs" style="left:854px;top:637px;width:56px;height:27px;line-height:30px;background:#ffffff"><span style="color:#0000ee">走</span></div>
<div class="c lg" style="left:2px;top:665px;width:55px;height:27px;line-height:30px;background:#8a4500">埃及超</div>
<div class="c dt" style="left:58px;top:665px;width:72px;height:27px;line-height:30px;background:#efefef">24-05-15</div>
<div class="c " style="left:131px;top:665px;width:104px;height:27px;line-height:30px;background:#efefef"><span style="color:#007000">佩哈亚克(中)</span></div>
<div class="c sc" style="left:236px;top:665px;width:86px;height:27px;line-height:30px;background:#efefef"><span style="color:#ff0000">1-0</span>(0-0)</div>
<div class="c dt" style="left:323px;top:665px;width:38px;height:27px;line-height:30px;background:#efefef">0-3</div>
<div class="c " style="left:362px;top:665px;width:72px;height:27px;line-height:30px;background:#efefef"><span style="color:#000">巴拉蒂耶</span></div>
<div class="c od" style="left:435px;top:665px;width:38px;height:27px;line-height:30px;background:#fdf9f6">0.96</div>
<div class="c od" style="left:474px;top:665px;width:74px;height:27px;line-height:30px;background:#fdf9f6"><span class="hc">半/一</span></div>
<div class="c od" style="left:549px;top:665px;width:38px;height:27px;line-height:30px;background:#fdf9f6">0.92</div>
<div class="c od" style="left:588px;top:665px;width:57px;height:27px;line-height:30px;background:#eff6fb">1.71</div>
<div class="c od" style="left:646px;top:665px;width:57px;height:27px;line-height:30px;background:#eff6fb"><span class="dr">3.23</span></div>
<div class="c od" style="left:704px;top:665px;width:72px;height:27px;line-height:30px;background:#eff6fb">4.99</div>
<div class="c rs" style="left:777px;top:665px;width:37px;height:27px;line-height:30px;background:#efefef"><span style="color:#ff0000">胜</span></div>
<div class="c rs" style="left:815px;top:665px;width:38px;height:27px;line-height:30px;background:#efefef"><span style="color:#ff0000">赢</span></div>
<div class="c rs" style="left:854px;top:665px;width:56px;height:27px;line-height:30px;background:#efefef"><span style="color:#007000">小</span></div>
<div class="c lg" style="left:2px;top:693px;width:55px;height:27px;line-height:30px;background:#8a4500">埃及超</div>
<div class="c dt" style="left:58px;top:693px;width:72px;height:27px;line-height:30px;background:#ffffff">24-05-10</div>
<div class="c " style="left:131px;top:693px;width:104px;height:27px;line-height:30px;background:#ffffff"><span style="color:#000">艾尔格纳</span></div>
<div class="c sc" style="left:236px;top:693px;width:86px;height:27px;line-height:30px;background:#ffffff"><span style="color:#ff0000">1-2</span>(1-2)</div>
<div class="c dt" style="left:323px;top:693px;width:38px;height:27px;line-height:30px;background:#ffffff">3-2</div>
<div class="c " style="left:362px;top:693px;width:72px;height:27px;line-height:30px;background:#ffffff"><span style="color:#007000">佩哈亚克</span></div>
<div class="c od" style="left:435px;top:693px;width:38px;height:27px;line-height:30px;background:#fdf9f6">0.76</div>
<div class="c od" style="left:474px;top:693px;width:74px;height:27px;line-height:30px;background:#fdf9f6"><span class="hc"><span class="ast">*</span>平/半</span></div>
<div class="c od" style="left:549px;top:693px;width:38px;height:27px;line-height:30px;background:#fdf9f6">1.13</div>
<div class="c od" style="left:588px;top:693px;width:57px;height:27px;line-height:30px;background:#eff6fb">3.00</div>
<div class="c od" style="left:646px;top:693px;width:57px;height:27px;line-height:30px;background:#eff6fb"><span class="dr">2.73</span></div>
<div class="c od" style="left:704px;top:693px;width:72px;height:27px;line-height:30px;background:#eff6fb">2.53</div>
<div class="c rs" style="left:777px;top:693px;width:37px;height:27px;line-height:30px;background:#ffffff"><span style="color:#ff0000">胜</span></div>
<div class="c rs" style="left:815px;top:693px;width:38px;height:27px;line-height:30px;background:#ffffff"><span style="color:#ff0000">赢</span></div>
<div class="c rs" style="left:854px;top:693px;width:56px;height:27px;line-height:30px;background:#ffffff"><span style="color:#ff0000">大</span></div>
<div class="c lg" style="left:2px;top:721px;width:55px;height:27px;line-height:30px;background:#8a4500">埃及超</div>
<div class="c dt" style="left:58px;top:721px;width:72px;height:27px;line-height:30px;background:#efefef">24-05-04</div>
<div class="c " style="left:131px;top:721px;width:104px;height:27px;line-height:30px;background:#efefef"><span style="color:#007000">佩哈亚克</span></div>
<div class="c sc" style="left:236px;top:721px;width:86px;height:27px;line-height:30px;background:#efefef"><span style="color:#ff0000">0-2</span>(0-1)</div>
<div class="c dt" style="left:323px;top:721px;width:38px;height:27px;line-height:30px;background:#efefef">1-2</div>
<div class="c " style="left:362px;top:721px;width:72px;height:27px;line-height:30px;background:#efefef"><span style="color:#000">伊斯梅利</span></div>
<div class="c od" style="left:435px;top:721px;width:38px;height:27px;line-height:30px;background:#fdf9f6">0.75</div>
<div class="c od" style="left:474px;top:721px;width:74px;height:27px;line-height:30px;background:#fdf9f6"><span class="hc">平手</span></div>
<div class="c od" style="left:549px;top:721px;width:38px;height:27px;line-height:30px;background:#fdf9f6">1.14</div>
<div class="c od" style="left:588px;top:721px;width:57px;height:27px;line-height:30px;background:#eff6fb">2.59</div>
<div class="c od" style="left:646px;top:721px;width:57px;height:27px;line-height:30px;background:#eff6fb"><span class="dr">2.80</span></div>
<div class="c od" style="left:704px;top:721px;width:72px;height:27px;line-height:30px;background:#eff6fb">2.86</div>
<div class="c rs" style="left:777px;top:721px;width:37px;height:27px;line-height:30px;background:#efefef"><span style="color:#007000">负</span></div>
<div class="c rs" style="left:815px;top:721px;width:38px;height:27px;line-height:30px;background:#efefef"><span style="color:#007000">输</span></div>
<div class="c rs" style="left:854px;top:721px;width:56px;height:27px;line-height:30px;background:#efefef"><span style="color:#007000">小</span></div>
<div class="c sum" style="left:2px;top:749px;width:908px;height:27px;line-height:28px;background:#ffffff">近<span style="color:#f00">10</span>场,胜<span class="nb">4</span>平<span class="nb">3</span>负<span class="nb">3</span>, 胜率:<span style="color:#00f">40%</span> 赢率:<span style="color:#00f">55.5%</span> 大:<span style="color:#00f">33.3%</span> 单率:<span style="color:#00f">50%</span></div>
<span class="s " style="left:460px;top:429px;width:60px;height:20px">Crow*<svg class="chev" width="12" height="8"><path d="M1 1.5 L6 6.3 L11 1.5" stroke="#000" stroke-width="2.2" fill="none"/></svg></span>
<span class="s " style="left:527px;top:429px;width:36px;height:20px">终<svg class="chev" width="12" height="8"><path d="M1 1.5 L6 6.3 L11 1.5" stroke="#000" stroke-width="2.2" fill="none"/></svg></span>
<span class="s " style="left:618px;top:429px;width:84px;height:20px">胜平负均值<svg class="chev" width="12" height="8"><path d="M1 1.5 L6 6.3 L11 1.5" stroke="#000" stroke-width="2.2" fill="none"/></svg></span>
<span class="s " style="left:710px;top:429px;width:36px;height:20px">终<svg class="chev" width="12" height="8"><path d="M1 1.5 L6 6.3 L11 1.5" stroke="#000" stroke-width="2.2" fill="none"/></svg></span>
<span class="s " style="left:819px;top:429px;width:47px;height:20px">全场<svg class="chev" width="12" height="8"><path d="M1 1.5 L6 6.3 L11 1.5" stroke="#000" stroke-width="2.2" fill="none"/></svg></span>
</body></html>
